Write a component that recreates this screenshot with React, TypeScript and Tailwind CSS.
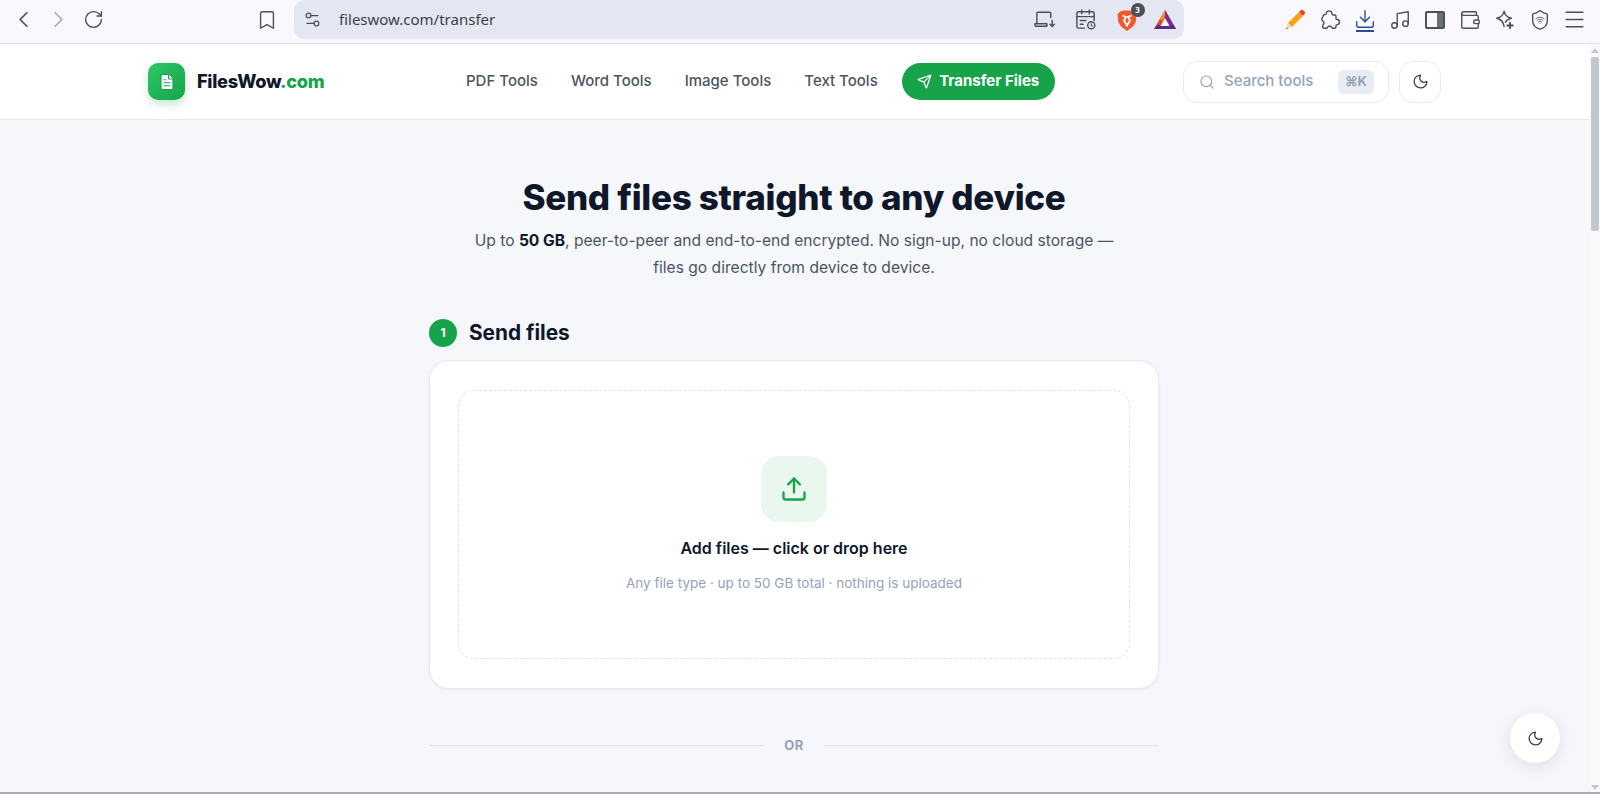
import React from "react";
import {
  ChevronLeft, ChevronRight, RotateCw, Bookmark, Settings2, Moon, Search, Send, Upload,
  Music, Wallet, Menu, Download, FileText, Shield, Wifi,
} from "lucide-react";

function Brave() {
  return (
    <div className="relative h-[24px] w-[24px]">
      <svg viewBox="0 0 24 24" className="h-[24px] w-[24px]">
        <path d="M5 3.500 9 2.500h6l4 1 2.500 3-.8 7.500-2.700 4.500L12 23l-6-4.500L3.300 14l-.8-7.500z" fill="#f0592b" />
        <path d="M7.500 7.500 11 9l-2 3.500 3 5 3-5L13 9l3.500-1.500" fill="none" stroke="#fff" strokeWidth="1.800" />
      </svg>
      <span className="absolute -right-[6px] -top-[5px] flex h-[14px] w-[14px] items-center justify-center rounded-full bg-[#4b4f58] font-['Noto_Sans',sans-serif] text-[8px] font-bold leading-none text-white">3</span>
    </div>
  );
}

function Bat() {
  return (
    <svg viewBox="0 0 24 24" className="h-[24px] w-[24px]">
      <path d="M12 2 23 21H1z" fill="#e8452c" />
      <path d="M12 2 23 21H17L12 12z" fill="#7c2d8c" />
      <path d="M1 21h22l-3-4H4z" fill="#5a2a91" />
      <path d="M12 10l4.500 8h-9z" fill="#fff" />
      <path d="M12 2 7 11l2 2 3-5z" fill="#f7931e" />
    </svg>
  );
}

function Pencil() {
  return (
    <svg viewBox="0 0 24 24" className="h-[24px] w-[24px]">
      <path d="M5 15 16 4l4 4L9 19z" fill="#f9a01b" />
      <path d="M16 4l2-2c.6-.5 1.200-.5 1.800 0l2 2c.5.6.5 1.200 0 1.800l-2 2z" fill="#e8413c" />
      <path d="M5 15l4 4-6 2z" fill="#f7d9a8" />
      <path d="M3.800 19.200 3 21l1.800-.6z" fill="#333" />
    </svg>
  );
}

function StarPlus() {
  return (
    <svg viewBox="0 0 24 24" className="h-[22px] w-[22px]" fill="none" stroke="#4b4f58" strokeWidth="1.600" strokeLinejoin="round" strokeLinecap="round">
      <path d="M11 2.500c1 4.500 3 6.500 8 7.500-3.500.8-5.500 2.200-6.500 4.500M11 2.500C10 7 8 9 3 10c5 1 7 3.500 8 9" />
      <path d="M17.500 15v6M14.500 18h6" strokeWidth="2" />
    </svg>
  );
}

function LaptopDown() {
  return (
    <svg viewBox="0 0 24 24" className="h-[23px] w-[23px]" fill="none" stroke="#4b4f58" strokeWidth="1.500" strokeLinecap="round" strokeLinejoin="round">
      <path d="M18.500 10V5.500a1 1 0 0 0-1-1H5a1 1 0 0 0-1 1V16" />
      <path d="M2 16.500h12.500V19H3a1 1 0 0 1-1-1z" />
      <path d="M20 13v6M17.800 17l2.200 2.200 2.200-2.200" />
    </svg>
  );
}

function CalendarLines() {
  return (
    <svg viewBox="0 0 24 24" className="h-[23px] w-[23px]" fill="none" stroke="#4b4f58" strokeWidth="1.500" strokeLinecap="round" strokeLinejoin="round">
      <path d="M11 21H4.500A1.500 1.500 0 0 1 3 19.500v-14A1.500 1.500 0 0 1 4.500 4h15A1.500 1.500 0 0 1 21 5.500V13" />
      <path d="M3 9h18M8 2v4M16 2v4M6.500 13h6M6.500 17h3" />
      <circle cx="18" cy="18" r="3.700" />
      <path d="M18 16.500V18l1 .7" strokeWidth="1.200" />
    </svg>
  );
}

function PuzzleBlob() {
  return (
    <svg viewBox="0 0 24 24" className="h-[22px] w-[22px]" fill="none" stroke="#4b4f58" strokeWidth="1.500" strokeLinejoin="round">
      <path d="M8 5c0-4 6-4 6 0 0 1 .5 1.500 1.500 1.500h2a1 1 0 0 1 1 1V10c0 1 .5 1.500 1.500 1.500 3 0 3 5.500 0 5.500-1 0-1.500.5-1.500 1.500v1a1.500 1.500 0 0 1-1.500 1.500H15c-1.500 0-1-2.500-3.500-2.500S9.500 21 8 21H5.500A1.500 1.500 0 0 1 4 19.500V18c0-1 1.500-1 1.500-3S3 13 3 11.500 4.500 8 4.500 8C4.500 6.500 5 6 6.500 6 7.500 6 8 6 8 5z" />
    </svg>
  );
}

function SidePanel() {
  return (
    <div className="flex h-[18px] w-[20px] overflow-hidden rounded-[2px] border-2 border-[#4b4f58]">
      <div className="flex-1" />
      <div className="w-[6px] bg-[#6b6f78]" />
    </div>
  );
}

function ShieldWifi() {
  return (
    <div className="relative flex h-[22px] w-[22px] items-center justify-center">
      <Shield size={22} strokeWidth={1.5} color="#4b4f58" />
      <Wifi size={10} strokeWidth={2} color="#4b4f58" className="absolute" />
    </div>
  );
}

function Tool({ children, className = "" }: { children: React.ReactNode; className?: string }) {
  return <div className={`flex h-[35px] w-[35px] items-center justify-center ${className}`}>{children}</div>;
}

function BrowserBar() {
  const c = "#4b4f58";
  return (
    <div className="flex h-[44px] shrink-0 items-center border-b border-b-[#dfe1e8] bg-[#f9f9fd] font-['Noto_Sans',sans-serif]">
      <div className="flex w-[294px] items-center pb-[4px] pl-[6px]">
        <Tool><ChevronLeft size={27} strokeWidth={1.5} color={c} /></Tool>
        <Tool><ChevronRight size={27} strokeWidth={1.5} color="#a9adb8" /></Tool>
        <Tool><RotateCw size={21} strokeWidth={1.6} color={c} /></Tool>
        <div className="flex-1" />
        <Tool className="mr-[10px]"><Bookmark size={22} strokeWidth={1.5} color={c} /></Tool>
      </div>
      <div className="flex h-[39px] w-[890px] items-center self-start rounded-[10px] bg-[#e4e7f2] pl-[9px] pr-[1px]">
        <Settings2 size={19} strokeWidth={1.5} color={c} className="shrink-0" />
        <span className="ml-[17px] flex-1 text-[15px] leading-none text-[#3d4048]">fileswow.com/transfer</span>
        <div className="flex items-center gap-[6px] pr-[1px]">
          <Tool><LaptopDown /></Tool>
          <Tool><CalendarLines /></Tool>
          <Tool className="-mr-[3px]"><Brave /></Tool>
          <Tool><Bat /></Tool>
        </div>
      </div>
      <div className="ml-[93px] flex flex-1 items-center pb-[4px]">
        <Tool><Pencil /></Tool>
        <Tool><PuzzleBlob /></Tool>
        <Tool>
          <div className="flex flex-col items-center">
            <Download size={22} strokeWidth={1.5} color="#2f4a9c" />
            <div className="h-[2px] w-[18px] bg-[#2f4a9c]" />
          </div>
        </Tool>
        <Tool><Music size={22} strokeWidth={1.5} color={c} /></Tool>
        <Tool><SidePanel /></Tool>
        <Tool><Wallet size={22} strokeWidth={1.5} color={c} /></Tool>
        <Tool><StarPlus /></Tool>
        <Tool><ShieldWifi /></Tool>
        <Tool><Menu size={25} strokeWidth={1.5} color={c} /></Tool>
      </div>
    </div>
  );
}

function Header() {
  return (
    <header className="flex h-[76px] shrink-0 items-center border-b border-b-[#e8eaf0] bg-white pl-[148px] pr-[149px]">
      <div className="flex w-[318px] items-center gap-[12px]">
        <div className="flex h-[37px] w-[37px] items-center justify-center rounded-[10px] bg-gradient-to-br from-[#2cc866] to-[#16a34a] shadow-[0_4px_10px_rgba(22,163,74,0.25)]">
          <FileText size={18} color="#16a34a" fill="#ffffff" strokeWidth={1.5} />
        </div>
        <span className="text-[18.2px] font-extrabold tracking-[-0.3px] text-[#0f172a]">
          FilesWow<span className="text-[#16a34a]">.com</span>
        </span>
      </div>
      <nav className="flex flex-1 items-center gap-[33px] text-[15px] font-medium text-[#4b5563]">
        <span>PDF Tools</span>
        <span>Word Tools</span>
        <span>Image Tools</span>
        <span>Text Tools</span>
        <div className="-ml-[9px] flex h-[37px] w-[153px] items-center justify-center gap-[7px] rounded-full bg-[#16a34a] text-[15px] font-bold text-white">
          <Send size={15} strokeWidth={2} color="#fff" />
          Transfer Files
        </div>
      </nav>
      <div className="flex h-[42px] w-[206px] items-center rounded-[14px] border border-[#e8eaf0] pl-[15px] pr-[14px]">
        <Search size={16} strokeWidth={1.8} color="#94a3b8" />
        <span className="ml-[9px] flex-1 text-[15px] font-medium text-[#94a3b8]">Search tools</span>
        <span className="flex h-[24px] w-[36px] items-center justify-center rounded-[6px] bg-[#e8ecf3] text-[13px] font-bold text-[#94a3b8]">⌘K</span>
      </div>
      <div className="ml-[10px] flex h-[42px] w-[42px] items-center justify-center rounded-[14px] border border-[#e8eaf0]">
        <Moon size={17} strokeWidth={1.8} color="#334155" />
      </div>
    </header>
  );
}

function Main() {
  return (
    <main className="ml-[429px] flex w-[730px] flex-col items-stretch pt-[55px]">
      <h1 className="text-center text-[35px] font-extrabold leading-[44px] tracking-[-0.3px] text-[#0f172a]">Send files straight to any device</h1>
      <p className="mt-[9px] text-center text-[15.6px] leading-[26.5px] text-[#4b5563]">
        Up to <b className="font-bold text-[#0f172a]">50 GB</b>, peer-to-peer and end-to-end encrypted. No sign-up, no cloud storage —
        <br />
        files go directly from device to device.
      </p>
      <div className="mt-[36px] flex items-center gap-[12px]">
        <span className="flex h-[28px] w-[28px] items-center justify-center rounded-full bg-[#16a34a] text-[12px] font-bold text-white">1</span>
        <h2 className="text-[20.8px] font-bold text-[#0f172a]">Send files</h2>
      </div>
      <div className="mt-[12px] h-[329px] rounded-[20px] border border-[#e8eaf0] bg-white p-[28px] py-[29px] shadow-[0_1px_3px_rgba(15,23,42,0.06)]">
        <div className="flex h-full flex-col items-center rounded-[16px] border border-dashed border-[#dfe2ea] pt-[65px]">
          <div className="flex h-[66px] w-[66px] items-center justify-center rounded-[18px] bg-[#e9f7ee]">
            <Upload size={28} strokeWidth={2} color="#16a34a" />
          </div>
          <div className="mt-[14px] text-[16px] font-semibold leading-[24px] text-[#0f172a]">Add files — click or drop here</div>
          <div className="mt-[13px] text-[13.5px] leading-[20px] text-[#94a3b8]">Any file type · up to 50 GB total · nothing is uploaded</div>
        </div>
      </div>
      <div className="mt-[46px] flex items-center gap-[20px]">
        <div className="h-px flex-1 bg-[#e2e5ec]" />
        <span className="text-[13px] font-bold leading-[20px] tracking-[0.5px] text-[#94a3b8]">OR</span>
        <div className="h-px flex-1 bg-[#e2e5ec]" />
      </div>
    </main>
  );
}

export default function App() {
  return (
    <div className="flex h-[794px] w-[1600px] flex-col overflow-hidden bg-[#f6f7fb] font-['Inter',sans-serif]">
      <BrowserBar />
      <div className="relative flex min-h-0 flex-1">
        <div className="flex min-w-0 flex-1 flex-col">
          <Header />
          <Main />
        </div>
        <div className="flex w-[10px] flex-col items-center justify-between bg-[#f9f9fb] pb-[2px] pt-[4px]">
          <div className="flex flex-col items-center gap-[4px]">
            <div className="h-0 w-0 border-x-[4px] border-b-[5px] border-x-transparent border-b-[#c2c6cf]" />
            <div className="h-[174px] w-[8px] rounded-[2px] bg-[#c2c6cf]" />
          </div>
          <div className="h-0 w-0 border-x-[4px] border-t-[5px] border-x-transparent border-t-[#c2c6cf]" />
        </div>
        <button className="absolute bottom-[29px] left-[1510px] flex h-[50px] w-[50px] items-center justify-center rounded-full bg-white shadow-[0_4px_16px_rgba(15,23,42,0.1)]">
          <Moon size={17} strokeWidth={1.8} color="#334155" />
        </button>
      </div>
      <div className="h-[2px] shrink-0 bg-[#a8abb2]" />
    </div>
  );
}
